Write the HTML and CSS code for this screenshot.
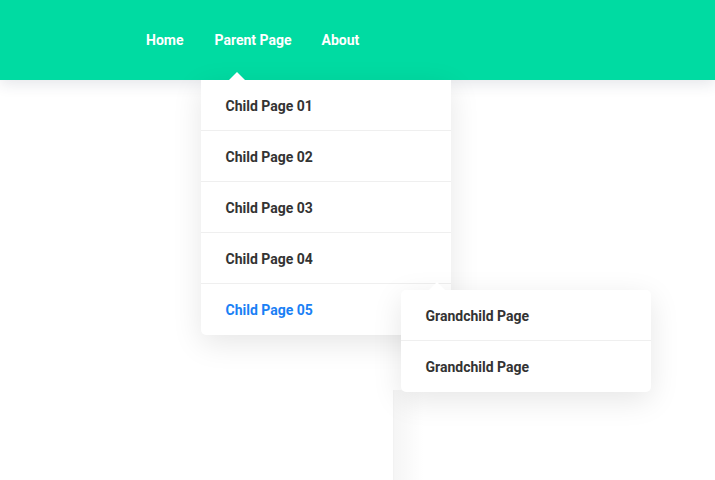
FILE: index.html
```html
<!DOCTYPE html>
<html>
<head>
<meta charset="utf-8">
<link rel="stylesheet" href="styles.css">
</head>
<body>
<header class="header">
  <nav class="nav">
    <ul class="menu">
      <li class="menu-item"><a href="#">Home</a></li>
      <li class="menu-item has-sub">
        <a href="#">Parent Page</a>
        <ul class="dropdown">
          <li class="drop-item"><a href="#">Child Page 01</a></li>
          <li class="drop-item"><a href="#">Child Page 02</a></li>
          <li class="drop-item"><a href="#">Child Page 03</a></li>
          <li class="drop-item"><a href="#">Child Page 04</a></li>
          <li class="drop-item active has-sub2">
            <a href="#">Child Page 05</a>
            <ul class="dropdown sub">
              <li class="drop-item"><a href="#">Grandchild Page</a></li>
              <li class="drop-item"><a href="#">Grandchild Page</a></li>
            </ul>
          </li>
        </ul>
      </li>
      <li class="menu-item"><a href="#">About</a></li>
    </ul>
  </nav>
</header>
<div class="ghost"></div>
</body>
</html>
```
FILE: styles.css
```css
* { box-sizing: border-box; }
html, body { margin: 0; padding: 0; background: #fff; }
body { font-family: Roboto, "Liberation Sans", sans-serif; overflow: hidden; height: 480px; position: relative; }
ul { list-style: none; margin: 0; padding: 0; }
a { text-decoration: none; }

.header {
  height: 80px;
  background: #00dba2;
  box-shadow: 0 4px 14px rgba(40, 50, 80, 0.12);
  position: relative;
  z-index: 2;
}
.nav { padding-left: 146px; height: 100%; }
.menu { display: flex; gap: 30px; height: 100%; align-items: center; }
.menu-item { position: relative; }
.menu-item > a {
  color: #fff;
  font-weight: 700;
  font-size: 14px;
  line-height: 80px;
  display: block;
}
.menu-item.has-sub { margin-left: 1px; }

.dropdown {
  position: absolute;
  top: 80px;
  left: -13px;
  width: 250px;
  background: #fff;
  border-radius: 0 0 5px 5px;
  box-shadow: 0 8px 30px rgba(0, 0, 0, 0.1);
}
.dropdown::before {
  content: "";
  position: absolute;
  top: -8px;
  left: 28px;
  border-left: 8px solid transparent;
  border-right: 8px solid transparent;
  border-bottom: 8px solid #fff;
}
.drop-item { position: relative; border-bottom: 1px solid #efefef; }
.drop-item:last-child { border-bottom: none; }
.drop-item > a {
  display: block;
  height: 50px;
  line-height: 52px;
  padding-left: 24px;
  color: #333;
  font-weight: 700;
  font-size: 14px;
}
.drop-item:last-child > a { height: 51px; }
.drop-item.active > a { color: #1a80f5; }

.dropdown.sub {
  top: 6px;
  left: 200px;
  border-radius: 5px;
  box-shadow: 0 8px 30px rgba(0, 0, 0, 0.1);
}
.dropdown.sub::before { left: 28px; }

.ghost {
  position: absolute;
  left: 393px;
  top: 390px;
  width: 322px;
  height: 90px;
  background: linear-gradient(90deg, rgba(0,0,0,0.04), rgba(0,0,0,0) 30px);
  border-left: 1px solid #f2f2f2;
}
```
